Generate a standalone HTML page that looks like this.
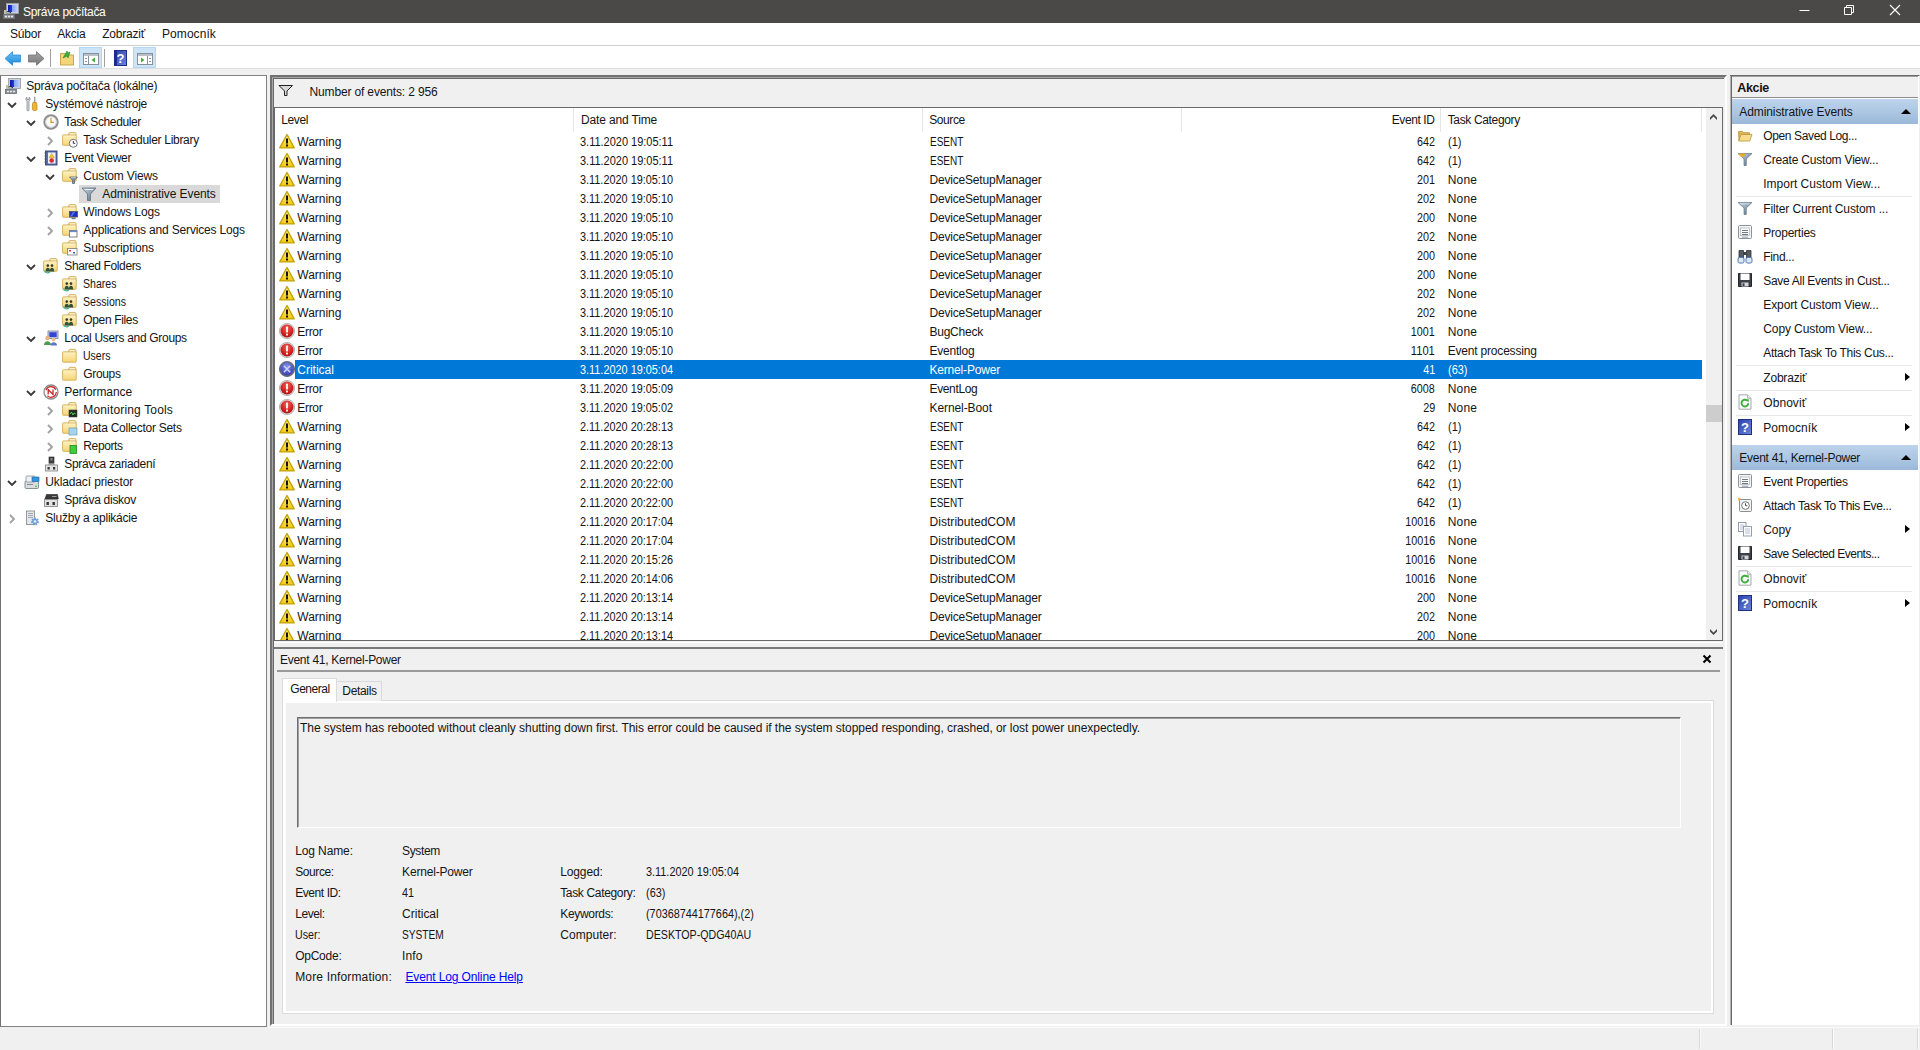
<!DOCTYPE html>
<html lang="sk"><head><meta charset="utf-8"><title>Správa počítača</title>
<style>
*{box-sizing:border-box;margin:0;padding:0}
html,body{width:1920px;height:1050px;overflow:hidden;background:#f0f0f0}
body{font-family:"Liberation Sans",sans-serif;font-size:12px;color:#141414;position:relative}
.abs{position:absolute}
.t{position:absolute;white-space:nowrap;line-height:16px;height:16px}
svg{display:block}
.ic{position:absolute;width:16px;height:16px}
#title{left:0;top:0;width:1920px;height:23px;background:#4a4948}
#menubar{left:0;top:23px;width:1920px;height:22px;background:#fff}
#toolbar{left:0;top:45px;width:1920px;height:23px;background:#fff;border-top:1px solid #cfcfcf}
#tree{left:0;top:75px;width:267px;height:952px;background:#fff;border:1px solid #828282;border-left:1px solid #707070}
#mid{left:270px;top:75px;width:1457px;height:951px;background:#f0f0f0;border:2px solid #707070;border-right-color:#fff;border-bottom-color:#fff}
.row{position:absolute;left:0;height:19px;width:1430px}
.c{position:absolute;top:2px;line-height:16px;white-space:nowrap}
.chev{position:absolute;width:10px;height:10px}
.act{position:absolute;left:1763px;white-space:nowrap;line-height:16px}
.sep{position:absolute;left:1736px;width:176px;height:1px;background:#e8e8e8}
.arr{position:absolute;left:1905px;width:0;height:0;border-left:5px solid #000;border-top:4.5px solid transparent;border-bottom:4.5px solid transparent}
.lab{position:absolute;white-space:nowrap;line-height:16px}
</style></head><body>

<div id="title" class="abs"></div>
<div class="ic" style="left:3px;top:3px"><svg width="16" height="16" viewBox="0 0 16 16"><defs><linearGradient id="cs" x1="0" y1="0" x2="1" y2="0"><stop offset="0" stop-color="#0a14a8"/><stop offset=".45" stop-color="#2a3fe0"/><stop offset=".5" stop-color="#8aa6f8"/><stop offset="1" stop-color="#b8ccff"/></linearGradient></defs><rect x="3.500" y=".5" width="12" height="10" fill="#cdd1d8" stroke="#9aa0a8" stroke-width=".9"/><rect x="5" y="2" width="9" height="7" fill="url(#cs)"/><path d="M2 11.500c.5-3 3.500-4 6-1.500" fill="none" stroke="#2a2a2a" stroke-width="1"/><rect x="1" y="7" width="2.500" height="4" fill="#b9c3b0"/><rect x=".5" y="11.500" width="11" height="4" fill="#8b9097" stroke="#686d74" stroke-width=".8"/><path d="M2 13.500h2M5 13.500h2M8 13.500h2" stroke="#e8e8e8" stroke-width="1.400"/></svg></div>
<div class="t" style="left:23px;top:4px;letter-spacing:-0.281px;color:#fff;">Správa počítača</div>
<svg class="abs" style="left:1790px;top:0" width="130" height="23" viewBox="0 0 130 23"><path d="M9.500 10.500h10" stroke="#fff" stroke-width="1"/><path d="M54.500 7.500h7v7h-7zM56.500 7.500v-2h7v7h-2" fill="none" stroke="#fff" stroke-width="1"/><path d="M100 5l10 10M110 5l-10 10" stroke="#fff" stroke-width="1.100"/></svg>
<div id="menubar" class="abs"></div>
<div class="t" style="left:10px;top:26px;letter-spacing:-0.206px;">Súbor</div>
<div class="t" style="left:57.2px;top:26px;letter-spacing:-0.189px;">Akcia</div>
<div class="t" style="left:102.2px;top:26px;letter-spacing:-0.202px;">Zobraziť</div>
<div class="t" style="left:162px;top:26px;letter-spacing:0.068px;">Pomocník</div>
<div id="toolbar" class="abs"></div>
<div class="abs" style="left:0;top:68px;width:1920px;height:1px;background:#dfdfdf"></div>
<svg class="abs" style="left:0;top:46px" width="170" height="22" viewBox="0 0 170 22"><defs><linearGradient id="ab" x1="0" y1="0" x2="0" y2="1"><stop offset="0" stop-color="#6cc4f6"/><stop offset="1" stop-color="#1c86d8"/></linearGradient><linearGradient id="ag" x1="0" y1="0" x2="0" y2="1"><stop offset="0" stop-color="#a8a8a8"/><stop offset="1" stop-color="#747474"/></linearGradient></defs><path d="M5 12.500l7.500-6.800v3.300h8v7h-8v3.300z" fill="url(#ab)" stroke="#2a8ad6" stroke-width=".8" stroke-linejoin="round"/><path d="M44 12.500l-7.500-6.800v3.300h-8v7h8v3.300z" fill="url(#ag)" stroke="#6e6e6e" stroke-width=".8" stroke-linejoin="round"/><path d="M50.500 3v18" stroke="#a0a0a0" stroke-width="1"/><path d="M60.500 7.500h5l1 1.500h7v10h-13z" fill="#f3d67a" stroke="#c9a64a" stroke-width="1"/><path d="M63 12l4-7 1 2 2-1-2 6-1-2z" fill="#3fae3f" stroke="#2a8a2a" stroke-width=".6"/><rect x="79.500" y="1.500" width="22" height="20" fill="#cce4f7" stroke="#b3d6f3" stroke-width="1"/><rect x="83.500" y="7.500" width="15" height="11" fill="#fff" stroke="#8a9099" stroke-width="1"/><rect x="84" y="8" width="14" height="2" fill="#b9c0c9"/><path d="M88.500 10v8" stroke="#8a9099"/><path d="M95 11.500v5l-3.500-2.500z" fill="#3fae3f"/><path d="M85 12.500h2M85 15.500h2" stroke="#8a9099"/><path d="M104.500 3v18" stroke="#a0a0a0" stroke-width="1"/><rect x="114.500" y="4.500" width="12" height="15" fill="url(#hg2)" stroke="#1f2f86" stroke-width="1"/><rect x="114" y="4" width="3" height="16" fill="#1c2c8e"/><defs><linearGradient id="hg2" x1="0" y1="0" x2="1" y2="1"><stop offset="0" stop-color="#2a3fae"/><stop offset="1" stop-color="#6c88dc"/></linearGradient></defs><text x="120.500" y="17" font-family="Liberation Sans,sans-serif" font-weight="bold" font-size="13" fill="#fff" text-anchor="middle">?</text><rect x="133.500" y="1.500" width="22" height="20" fill="#cce4f7" stroke="#b3d6f3" stroke-width="1"/><rect x="137.500" y="7.500" width="15" height="11" fill="#fff" stroke="#8a9099" stroke-width="1"/><rect x="138" y="8" width="14" height="2" fill="#b9c0c9"/><path d="M147.500 10v8" stroke="#8a9099"/><path d="M141 11.500v5l3.500-2.500z" fill="#3fae3f"/><path d="M149 12.500h2M149 15.500h2" stroke="#8a9099"/></svg>
<div id="tree" class="abs"></div>
<div class="ic" style="left:5px;top:78px"><svg width="16" height="16" viewBox="0 0 16 16"><defs><linearGradient id="cs" x1="0" y1="0" x2="1" y2="0"><stop offset="0" stop-color="#0a14a8"/><stop offset=".45" stop-color="#2a3fe0"/><stop offset=".5" stop-color="#8aa6f8"/><stop offset="1" stop-color="#b8ccff"/></linearGradient></defs><rect x="3.500" y=".5" width="12" height="10" fill="#cdd1d8" stroke="#9aa0a8" stroke-width=".9"/><rect x="5" y="2" width="9" height="7" fill="url(#cs)"/><path d="M2 11.500c.5-3 3.500-4 6-1.500" fill="none" stroke="#2a2a2a" stroke-width="1"/><rect x="1" y="7" width="2.500" height="4" fill="#b9c3b0"/><rect x=".5" y="11.500" width="11" height="4" fill="#8b9097" stroke="#686d74" stroke-width=".8"/><path d="M2 13.500h2M5 13.500h2M8 13.500h2" stroke="#e8e8e8" stroke-width="1.400"/></svg></div>
<div class="t" style="left:26.3px;top:78px;letter-spacing:-0.203px;">Správa počítača (lokálne)</div>
<svg class="chev" style="left:7px;top:100px" viewBox="0 0 10 10"><path d="M1 3l4 4 4-4" fill="none" stroke="#3a3a3a" stroke-width="1.800"/></svg>
<div class="ic" style="left:24px;top:96px"><svg width="16" height="16" viewBox="0 0 16 16"><path d="M3 1.2c-1.6.8-1.6 3 0 3.8v9c0 1.2 2 1.2 2 0V5c1.6-.8 1.6-3 0-3.8v2.3H3z" fill="#d8dade" stroke="#7d828a" stroke-width=".7"/><path d="M10 .8h1.4v6H10z" fill="#9a9fa6"/><path d="M9 6.5h3.4l.6 2.5v4.6c0 1.4-4.6 1.4-4.6 0V9z" fill="#f1b72b" stroke="#b7811a" stroke-width=".7"/></svg></div>
<div class="t" style="left:45.3px;top:96px;letter-spacing:-0.199px;">Systémové nástroje</div>
<svg class="chev" style="left:26px;top:118px" viewBox="0 0 10 10"><path d="M1 3l4 4 4-4" fill="none" stroke="#3a3a3a" stroke-width="1.800"/></svg>
<div class="ic" style="left:43px;top:114px"><svg width="16" height="16" viewBox="0 0 16 16"><circle cx="8" cy="8" r="6.700" fill="#f4f4f4" stroke="#8e8e8e" stroke-width="2"/><circle cx="8" cy="8" r="5.200" fill="#fbfbfb" stroke="#d0d0d0" stroke-width=".8"/><path d="M8 4v4.300h3" stroke="#d39a2a" stroke-width="1.200" fill="none"/></svg></div>
<div class="t" style="left:64.3px;top:114px;letter-spacing:-0.389px;">Task Scheduler</div>
<svg class="chev" style="left:45px;top:136px" viewBox="0 0 10 10"><path d="M3 1l4 4-4 4" fill="none" stroke="#a0a0a0" stroke-width="1.800"/></svg>
<div class="ic" style="left:62px;top:132px"><svg width="16" height="16" viewBox="0 0 16 16"><defs><linearGradient id="fg" x1="0" y1="0" x2="0" y2="1"><stop offset="0" stop-color="#fef3c4"/><stop offset="1" stop-color="#f6d471"/></linearGradient></defs><g transform="translate(0,-1.1)"><path d="M6.800 2.500l.8-1h5.600l.8 1v3h-7.200z" fill="#f3dc98" stroke="#cfae5c" stroke-width=".9"/><rect x="7.900" y="2.600" width="5" height="1.600" fill="#fffdf2"/><rect x=".6" y="4" width="13.600" height="10.400" rx=".7" fill="url(#fg)" stroke="#d3ad58" stroke-width=".9"/></g><circle cx="11.300" cy="11.300" r="4" fill="#fff" stroke="#6f757c" stroke-width="1"/><path d="M11.300 9v2.300h1.900" stroke="#333" fill="none" stroke-width="1"/></svg></div>
<div class="t" style="left:83.3px;top:132px;letter-spacing:-0.294px;">Task Scheduler Library</div>
<svg class="chev" style="left:26px;top:154px" viewBox="0 0 10 10"><path d="M1 3l4 4 4-4" fill="none" stroke="#3a3a3a" stroke-width="1.800"/></svg>
<div class="ic" style="left:43px;top:150px"><svg width="16" height="16" viewBox="0 0 16 16"><rect x="2.5" y="1" width="11.5" height="14" fill="#5a6fb5" stroke="#34406f" stroke-width=".9"/><rect x="5" y="2.5" width="7.5" height="11" fill="#eef0f8"/><path d="M1.5 3h2.5M1.5 6h2.5M1.5 9h2.5M1.5 12h2.5" stroke="#555" stroke-width="1"/><circle cx="8.7" cy="10.5" r="2.3" fill="#d92c2c"/><path d="M8.7 3.5l2.6 4.2H6.1z" fill="#f4c91f" stroke="#a98300" stroke-width=".4"/></svg></div>
<div class="t" style="left:64.3px;top:150px;letter-spacing:-0.307px;">Event Viewer</div>
<svg class="chev" style="left:45px;top:172px" viewBox="0 0 10 10"><path d="M1 3l4 4 4-4" fill="none" stroke="#3a3a3a" stroke-width="1.800"/></svg>
<div class="ic" style="left:62px;top:168px"><svg width="16" height="16" viewBox="0 0 16 16"><defs><linearGradient id="fg" x1="0" y1="0" x2="0" y2="1"><stop offset="0" stop-color="#fef3c4"/><stop offset="1" stop-color="#f6d471"/></linearGradient></defs><g transform="translate(0,-1.1)"><path d="M6.800 2.500l.8-1h5.600l.8 1v3h-7.200z" fill="#f3dc98" stroke="#cfae5c" stroke-width=".9"/><rect x="7.900" y="2.600" width="5" height="1.600" fill="#fffdf2"/><rect x=".6" y="4" width="13.600" height="10.400" rx=".7" fill="url(#fg)" stroke="#d3ad58" stroke-width=".9"/></g><path d="M7.500 9h8l-3 3.200v3.300h-2v-3.300z" fill="#8896a4" stroke="#4d5a66" stroke-width=".7"/><path d="M8.800 9.700h5.400" stroke="#dfe6ee" stroke-width=".7"/></svg></div>
<div class="t" style="left:83.3px;top:168px;letter-spacing:-0.165px;">Custom Views</div>
<div class="abs" style="left:79px;top:185px;width:141px;height:18px;background:#d9d9d9"></div>
<div class="ic" style="left:81px;top:186px"><svg width="16" height="16" viewBox="0 0 16 16"><defs><linearGradient id="fu" x1="0" y1="0" x2="1" y2="1"><stop offset="0" stop-color="#c9d5e0"/><stop offset=".5" stop-color="#8fa2b4"/><stop offset="1" stop-color="#5d6e7e"/></linearGradient></defs><path d="M1 2h14l-5.500 6v6.500h-3V8z" fill="url(#fu)" stroke="#5f6f7f" stroke-width=".8"/><path d="M3.300 3h9.400l-1 1.100H4.300z" fill="#e9eef3"/></svg></div>
<div class="t" style="left:102.3px;top:186px;letter-spacing:-0.095px;">Administrative Events</div>
<svg class="chev" style="left:45px;top:208px" viewBox="0 0 10 10"><path d="M3 1l4 4-4 4" fill="none" stroke="#a0a0a0" stroke-width="1.800"/></svg>
<div class="ic" style="left:62px;top:204px"><svg width="16" height="16" viewBox="0 0 16 16"><defs><linearGradient id="fg" x1="0" y1="0" x2="0" y2="1"><stop offset="0" stop-color="#fef3c4"/><stop offset="1" stop-color="#f6d471"/></linearGradient></defs><g transform="translate(0,-1.1)"><path d="M6.800 2.500l.8-1h5.600l.8 1v3h-7.200z" fill="#f3dc98" stroke="#cfae5c" stroke-width=".9"/><rect x="7.900" y="2.600" width="5" height="1.600" fill="#fffdf2"/><rect x=".6" y="4" width="13.600" height="10.400" rx=".7" fill="url(#fg)" stroke="#d3ad58" stroke-width=".9"/></g><rect x="7.500" y="7.500" width="8" height="5.500" fill="#1f2fc4" stroke="#4a5666" stroke-width=".8"/><path d="M8 12.500l3-4.500h2l-3 4.500z" fill="#6f8cff" opacity=".7"/><rect x="9.500" y="14" width="4" height="1.200" fill="#6a7480"/></svg></div>
<div class="t" style="left:83.3px;top:204px;letter-spacing:-0.121px;">Windows Logs</div>
<svg class="chev" style="left:45px;top:226px" viewBox="0 0 10 10"><path d="M3 1l4 4-4 4" fill="none" stroke="#a0a0a0" stroke-width="1.800"/></svg>
<div class="ic" style="left:62px;top:222px"><svg width="16" height="16" viewBox="0 0 16 16"><defs><linearGradient id="fg" x1="0" y1="0" x2="0" y2="1"><stop offset="0" stop-color="#fef3c4"/><stop offset="1" stop-color="#f6d471"/></linearGradient></defs><g transform="translate(0,-1.1)"><path d="M6.800 2.500l.8-1h5.600l.8 1v3h-7.200z" fill="#f3dc98" stroke="#cfae5c" stroke-width=".9"/><rect x="7.900" y="2.600" width="5" height="1.600" fill="#fffdf2"/><rect x=".6" y="4" width="13.600" height="10.400" rx=".7" fill="url(#fg)" stroke="#d3ad58" stroke-width=".9"/></g><rect x="7.5" y="8.5" width="7.5" height="6.5" fill="#fff" stroke="#777" stroke-width=".9"/><rect x="7.5" y="8.5" width="7.5" height="1.6" fill="#6b86c9"/></svg></div>
<div class="t" style="left:83.3px;top:222px;letter-spacing:-0.172px;">Applications and Services Logs</div>
<div class="ic" style="left:62px;top:240px"><svg width="16" height="16" viewBox="0 0 16 16"><defs><linearGradient id="fg" x1="0" y1="0" x2="0" y2="1"><stop offset="0" stop-color="#fef3c4"/><stop offset="1" stop-color="#f6d471"/></linearGradient></defs><g transform="translate(0,-1.1)"><path d="M6.800 2.500l.8-1h5.600l.8 1v3h-7.200z" fill="#f3dc98" stroke="#cfae5c" stroke-width=".9"/><rect x="7.900" y="2.600" width="5" height="1.600" fill="#fffdf2"/><rect x=".6" y="4" width="13.600" height="10.400" rx=".7" fill="url(#fg)" stroke="#d3ad58" stroke-width=".9"/></g><rect x="5.5" y="8.5" width="9.5" height="6.5" fill="#fff" stroke="#888" stroke-width=".9"/><rect x="7" y="10" width="2" height="1.5" fill="#d33"/><rect x="11" y="12" width="2" height="1.5" fill="#36c"/></svg></div>
<div class="t" style="left:83.3px;top:240px;letter-spacing:-0.104px;">Subscriptions</div>
<svg class="chev" style="left:26px;top:262px" viewBox="0 0 10 10"><path d="M1 3l4 4 4-4" fill="none" stroke="#3a3a3a" stroke-width="1.800"/></svg>
<div class="ic" style="left:43px;top:258px"><svg width="16" height="16" viewBox="0 0 16 16"><defs><linearGradient id="fg" x1="0" y1="0" x2="0" y2="1"><stop offset="0" stop-color="#fef3c4"/><stop offset="1" stop-color="#f6d471"/></linearGradient></defs><g transform="translate(0,-1.1)"><path d="M6.800 2.500l.8-1h5.600l.8 1v3h-7.200z" fill="#f3dc98" stroke="#cfae5c" stroke-width=".9"/><rect x="7.900" y="2.600" width="5" height="1.600" fill="#fffdf2"/><rect x=".6" y="4" width="13.600" height="10.400" rx=".7" fill="url(#fg)" stroke="#d3ad58" stroke-width=".9"/></g><circle cx="4.800" cy="7.600" r="1.300" fill="#2a3a30"/><circle cx="9" cy="7.600" r="1.300" fill="#2a3a30"/><path d="M2.600 13.600c0-2.800 1.100-3.800 2.200-3.800s2.200 1 2.200 3.800zM6.800 13.600c0-2.800 1.100-3.800 2.200-3.800s2.200 1 2.200 3.800z" fill="#2f5240"/><path d="M1.500 12.600c.5 2.600 4 2.800 5.300 1.200" fill="none" stroke="#3fae8e" stroke-width="1.200"/></svg></div>
<div class="t" style="left:64.3px;top:258px;letter-spacing:-0.389px;">Shared Folders</div>
<div class="ic" style="left:62px;top:276px"><svg width="16" height="16" viewBox="0 0 16 16"><defs><linearGradient id="fg" x1="0" y1="0" x2="0" y2="1"><stop offset="0" stop-color="#fef3c4"/><stop offset="1" stop-color="#f6d471"/></linearGradient></defs><g transform="translate(0,-1.1)"><path d="M6.800 2.500l.8-1h5.600l.8 1v3h-7.200z" fill="#f3dc98" stroke="#cfae5c" stroke-width=".9"/><rect x="7.900" y="2.600" width="5" height="1.600" fill="#fffdf2"/><rect x=".6" y="4" width="13.600" height="10.400" rx=".7" fill="url(#fg)" stroke="#d3ad58" stroke-width=".9"/></g><circle cx="4.800" cy="7.600" r="1.300" fill="#2a3a30"/><circle cx="9" cy="7.600" r="1.300" fill="#2a3a30"/><path d="M2.600 13.600c0-2.800 1.100-3.800 2.200-3.800s2.200 1 2.200 3.800zM6.800 13.600c0-2.800 1.100-3.800 2.200-3.800s2.200 1 2.200 3.800z" fill="#2f5240"/><path d="M1.500 12.600c.5 2.600 4 2.800 5.300 1.200" fill="none" stroke="#3fae8e" stroke-width="1.200"/></svg></div>
<div class="t" style="left:83.3px;top:276px;"><span style="display:inline-block;transform-origin:left center;transform:scaleX(0.8809)">Shares</span></div>
<div class="ic" style="left:62px;top:294px"><svg width="16" height="16" viewBox="0 0 16 16"><defs><linearGradient id="fg" x1="0" y1="0" x2="0" y2="1"><stop offset="0" stop-color="#fef3c4"/><stop offset="1" stop-color="#f6d471"/></linearGradient></defs><g transform="translate(0,-1.1)"><path d="M6.800 2.500l.8-1h5.600l.8 1v3h-7.200z" fill="#f3dc98" stroke="#cfae5c" stroke-width=".9"/><rect x="7.900" y="2.600" width="5" height="1.600" fill="#fffdf2"/><rect x=".6" y="4" width="13.600" height="10.400" rx=".7" fill="url(#fg)" stroke="#d3ad58" stroke-width=".9"/></g><circle cx="4.800" cy="7.600" r="1.300" fill="#2a3a30"/><circle cx="9" cy="7.600" r="1.300" fill="#2a3a30"/><path d="M2.600 13.600c0-2.800 1.100-3.800 2.200-3.800s2.200 1 2.200 3.800zM6.800 13.600c0-2.800 1.100-3.800 2.200-3.800s2.200 1 2.200 3.800z" fill="#2f5240"/><path d="M1.500 12.600c.5 2.600 4 2.800 5.300 1.200" fill="none" stroke="#3fae8e" stroke-width="1.200"/></svg></div>
<div class="t" style="left:83.3px;top:294px;"><span style="display:inline-block;transform-origin:left center;transform:scaleX(0.8829)">Sessions</span></div>
<div class="ic" style="left:62px;top:312px"><svg width="16" height="16" viewBox="0 0 16 16"><defs><linearGradient id="fg" x1="0" y1="0" x2="0" y2="1"><stop offset="0" stop-color="#fef3c4"/><stop offset="1" stop-color="#f6d471"/></linearGradient></defs><g transform="translate(0,-1.1)"><path d="M6.800 2.500l.8-1h5.600l.8 1v3h-7.200z" fill="#f3dc98" stroke="#cfae5c" stroke-width=".9"/><rect x="7.900" y="2.600" width="5" height="1.600" fill="#fffdf2"/><rect x=".6" y="4" width="13.600" height="10.400" rx=".7" fill="url(#fg)" stroke="#d3ad58" stroke-width=".9"/></g><circle cx="4.800" cy="7.600" r="1.300" fill="#2a3a30"/><circle cx="9" cy="7.600" r="1.300" fill="#2a3a30"/><path d="M2.600 13.600c0-2.800 1.100-3.800 2.200-3.800s2.200 1 2.200 3.800zM6.800 13.600c0-2.800 1.100-3.800 2.200-3.800s2.200 1 2.200 3.800z" fill="#2f5240"/><path d="M1.500 12.600c.5 2.600 4 2.800 5.300 1.200" fill="none" stroke="#3fae8e" stroke-width="1.200"/></svg></div>
<div class="t" style="left:83.3px;top:312px;letter-spacing:-0.353px;">Open Files</div>
<svg class="chev" style="left:26px;top:334px" viewBox="0 0 10 10"><path d="M1 3l4 4 4-4" fill="none" stroke="#3a3a3a" stroke-width="1.800"/></svg>
<div class="ic" style="left:43px;top:330px"><svg width="16" height="16" viewBox="0 0 16 16"><rect x="5" y="1" width="10" height="7.5" fill="#cfd8ea" stroke="#6f7c92" stroke-width=".8"/><rect x="6.3" y="2.2" width="7.4" height="5" fill="#3246d1"/><circle cx="4.5" cy="8" r="2.2" fill="#e8b37a"/><path d="M1 15c0-5 7-5 7 0z" fill="#4f9a4f"/><circle cx="10.5" cy="9.5" r="2" fill="#e8c08a"/><path d="M7.5 15.5c0-4.5 6.5-4.5 6.5 0z" fill="#5a78c8"/></svg></div>
<div class="t" style="left:64.3px;top:330px;letter-spacing:-0.314px;">Local Users and Groups</div>
<div class="ic" style="left:62px;top:348px"><svg width="16" height="16" viewBox="0 0 16 16"><defs><linearGradient id="fg" x1="0" y1="0" x2="0" y2="1"><stop offset="0" stop-color="#fef3c4"/><stop offset="1" stop-color="#f6d471"/></linearGradient></defs><g transform="translate(0,-0.2)"><path d="M6.800 2.500l.8-1h5.600l.8 1v3h-7.200z" fill="#f3dc98" stroke="#cfae5c" stroke-width=".9"/><rect x="7.900" y="2.600" width="5" height="1.600" fill="#fffdf2"/><rect x=".6" y="4" width="13.600" height="10.400" rx=".7" fill="url(#fg)" stroke="#d3ad58" stroke-width=".9"/></g></svg></div>
<div class="t" style="left:83.3px;top:348px;"><span style="display:inline-block;transform-origin:left center;transform:scaleX(0.8774)">Users</span></div>
<div class="ic" style="left:62px;top:366px"><svg width="16" height="16" viewBox="0 0 16 16"><defs><linearGradient id="fg" x1="0" y1="0" x2="0" y2="1"><stop offset="0" stop-color="#fef3c4"/><stop offset="1" stop-color="#f6d471"/></linearGradient></defs><g transform="translate(0,-0.2)"><path d="M6.800 2.500l.8-1h5.600l.8 1v3h-7.200z" fill="#f3dc98" stroke="#cfae5c" stroke-width=".9"/><rect x="7.900" y="2.600" width="5" height="1.600" fill="#fffdf2"/><rect x=".6" y="4" width="13.600" height="10.400" rx=".7" fill="url(#fg)" stroke="#d3ad58" stroke-width=".9"/></g></svg></div>
<div class="t" style="left:83.3px;top:366px;letter-spacing:-0.343px;">Groups</div>
<svg class="chev" style="left:26px;top:388px" viewBox="0 0 10 10"><path d="M1 3l4 4 4-4" fill="none" stroke="#3a3a3a" stroke-width="1.800"/></svg>
<div class="ic" style="left:43px;top:384px"><svg width="16" height="16" viewBox="0 0 16 16"><circle cx="8" cy="8" r="7" fill="#fff" stroke="#8a8a8a" stroke-width="1.3"/><circle cx="8" cy="8" r="5.3" fill="none" stroke="#cc2222" stroke-width="1.2" stroke-dasharray="12 6"/><path d="M5.2 10.5V5.5l4.8 5V5.5" stroke="#cc2222" stroke-width="1.3" fill="none"/></svg></div>
<div class="t" style="left:64.3px;top:384px;letter-spacing:-0.091px;">Performance</div>
<svg class="chev" style="left:45px;top:406px" viewBox="0 0 10 10"><path d="M3 1l4 4-4 4" fill="none" stroke="#a0a0a0" stroke-width="1.800"/></svg>
<div class="ic" style="left:62px;top:402px"><svg width="16" height="16" viewBox="0 0 16 16"><defs><linearGradient id="fg" x1="0" y1="0" x2="0" y2="1"><stop offset="0" stop-color="#fef3c4"/><stop offset="1" stop-color="#f6d471"/></linearGradient></defs><g transform="translate(0,-1.1)"><path d="M6.800 2.500l.8-1h5.600l.8 1v3h-7.200z" fill="#f3dc98" stroke="#cfae5c" stroke-width=".9"/><rect x="7.900" y="2.600" width="5" height="1.600" fill="#fffdf2"/><rect x=".6" y="4" width="13.600" height="10.400" rx=".7" fill="url(#fg)" stroke="#d3ad58" stroke-width=".9"/></g><rect x="7" y="8" width="8" height="7" fill="#1d2a1d" stroke="#444" stroke-width=".6"/><path d="M8 12l1.5-2 1.5 3 1.2-2 1.5 1" stroke="#5fe05f" fill="none" stroke-width=".9"/></svg></div>
<div class="t" style="left:83.3px;top:402px;letter-spacing:0.158px;">Monitoring Tools</div>
<svg class="chev" style="left:45px;top:424px" viewBox="0 0 10 10"><path d="M3 1l4 4-4 4" fill="none" stroke="#a0a0a0" stroke-width="1.800"/></svg>
<div class="ic" style="left:62px;top:420px"><svg width="16" height="16" viewBox="0 0 16 16"><defs><linearGradient id="fg" x1="0" y1="0" x2="0" y2="1"><stop offset="0" stop-color="#fef3c4"/><stop offset="1" stop-color="#f6d471"/></linearGradient></defs><g transform="translate(0,-1.1)"><path d="M6.800 2.500l.8-1h5.600l.8 1v3h-7.200z" fill="#f3dc98" stroke="#cfae5c" stroke-width=".9"/><rect x="7.900" y="2.600" width="5" height="1.600" fill="#fffdf2"/><rect x=".6" y="4" width="13.600" height="10.400" rx=".7" fill="url(#fg)" stroke="#d3ad58" stroke-width=".9"/></g><rect x="7" y="8" width="8" height="7" fill="#a7d2e8" stroke="#6aa0bd" stroke-width=".7"/></svg></div>
<div class="t" style="left:83.3px;top:420px;letter-spacing:-0.263px;">Data Collector Sets</div>
<svg class="chev" style="left:45px;top:442px" viewBox="0 0 10 10"><path d="M3 1l4 4-4 4" fill="none" stroke="#a0a0a0" stroke-width="1.800"/></svg>
<div class="ic" style="left:62px;top:438px"><svg width="16" height="16" viewBox="0 0 16 16"><defs><linearGradient id="fg" x1="0" y1="0" x2="0" y2="1"><stop offset="0" stop-color="#fef3c4"/><stop offset="1" stop-color="#f6d471"/></linearGradient></defs><g transform="translate(0,-1.1)"><path d="M6.800 2.500l.8-1h5.600l.8 1v3h-7.200z" fill="#f3dc98" stroke="#cfae5c" stroke-width=".9"/><rect x="7.900" y="2.600" width="5" height="1.600" fill="#fffdf2"/><rect x=".6" y="4" width="13.600" height="10.400" rx=".7" fill="url(#fg)" stroke="#d3ad58" stroke-width=".9"/></g><rect x="8" y="7.5" width="6.5" height="8" fill="#3ccf3c" stroke="#1f8f1f" stroke-width=".8"/></svg></div>
<div class="t" style="left:83.3px;top:438px;letter-spacing:-0.376px;">Reports</div>
<div class="ic" style="left:43px;top:456px"><svg width="16" height="16" viewBox="0 0 16 16"><rect x="6" y="1" width="5" height="6.500" fill="#3e3e3e" stroke="#222" stroke-width=".6"/><rect x="7.500" y="2" width="2" height="2.500" fill="#8a8a8a"/><path d="M4.500 9.500l1.500-2h5l1.500 2z" fill="#b8b8b8"/><rect x="2.500" y="9" width="12" height="6" fill="#e4e4e4" stroke="#8c8c8c" stroke-width=".9"/><rect x="4.500" y="11" width="2.200" height="2.500" fill="#333"/><rect x="10" y="11" width="2.200" height="2.500" fill="#333"/></svg></div>
<div class="t" style="left:64.3px;top:456px;letter-spacing:-0.337px;">Správca zariadení</div>
<svg class="chev" style="left:7px;top:478px" viewBox="0 0 10 10"><path d="M1 3l4 4 4-4" fill="none" stroke="#3a3a3a" stroke-width="1.800"/></svg>
<div class="ic" style="left:24px;top:474px"><svg width="16" height="16" viewBox="0 0 16 16"><rect x="1" y="7" width="13.5" height="7.5" rx="1.2" fill="#d9dde2" stroke="#7a828c" stroke-width=".9"/><rect x="2" y="2" width="9" height="6" rx="1" fill="#eef1f5" stroke="#8a929c" stroke-width=".8"/><rect x="8" y="3" width="7" height="4.5" fill="#2f95e0" stroke="#1a66a8" stroke-width=".6"/><circle cx="12" cy="12.3" r=".9" fill="#3bbf3b"/><rect x="3" y="10" width="6" height="1" fill="#888"/></svg></div>
<div class="t" style="left:45.3px;top:474px;letter-spacing:-0.132px;">Ukladací priestor</div>
<div class="ic" style="left:43px;top:492px"><svg width="16" height="16" viewBox="0 0 16 16"><path d="M3.500 2.500h11l.8 4.500H2z" fill="#3a3a3a" stroke="#222" stroke-width=".6"/><rect x="9" y="4" width="4.500" height="1" fill="#9a9a9a"/><rect x="1.500" y="7.500" width="13" height="7" fill="#e2e2e2" stroke="#8a8a8a" stroke-width=".9"/><rect x="3.500" y="10" width="2.400" height="3" fill="#333"/><rect x="9.500" y="10" width="2.400" height="3" fill="#333"/></svg></div>
<div class="t" style="left:64.3px;top:492px;letter-spacing:-0.290px;">Správa diskov</div>
<svg class="chev" style="left:7px;top:514px" viewBox="0 0 10 10"><path d="M3 1l4 4-4 4" fill="none" stroke="#a0a0a0" stroke-width="1.800"/></svg>
<div class="ic" style="left:24px;top:510px"><svg width="16" height="16" viewBox="0 0 16 16"><rect x="2.5" y="1" width="8" height="13.5" fill="#e4e7eb" stroke="#8a9098" stroke-width=".9"/><path d="M4 3.5h5M4 5.5h5M4 7.5h5" stroke="#9aa0a8" stroke-width=".9"/><circle cx="11" cy="11.5" r="3" fill="none" stroke="#6f9fd8" stroke-width="2" stroke-dasharray="1.6 1"/><circle cx="11" cy="11.5" r="2.2" fill="#9cc2ee" stroke="#4f82c0" stroke-width=".7"/><circle cx="11" cy="11.5" r=".9" fill="#fff"/></svg></div>
<div class="t" style="left:45.3px;top:510px;letter-spacing:-0.231px;">Služby a aplikácie</div>
<div id="mid" class="abs"></div>
<div class="abs" style="left:272px;top:77px;width:1453px;height:947px;border-left:1px solid #a6a6a6;border-top:1px solid #a6a6a6"></div>
<div class="abs" style="left:273px;top:78px;width:1451px;height:946px;border-left:1px solid #696969;border-top:1px solid #696969"></div>
<svg class="abs" style="left:278px;top:84px" width="16" height="14" viewBox="0 0 16 14"><path d="M1 1.500h13.500L9 7v4.500H6.500V7z" fill="#d8d8d8" stroke="#222" stroke-width="1"/></svg>
<div class="t" style="left:309.5px;top:84px;letter-spacing:-0.149px;">Number of events: 2 956</div>
<div class="abs" style="left:273px;top:107px;width:1450px;height:534px;background:#fff;border:1px solid #696969;overflow:hidden" id="tbl">
<div class="c" style="left:7.3px;letter-spacing:-0.417px;top:4px;">Level</div>
<div class="c" style="left:307px;letter-spacing:-0.157px;top:4px;">Date and Time</div>
<div class="c" style="left:655.3px;letter-spacing:-0.439px;top:4px;">Source</div>
<div class="c" style="left:1173.7px;letter-spacing:-0.346px;top:4px;">Task Category</div>
<div class="c" style="left:1060.6px;letter-spacing:-0.391px;width:100px;text-align:right;top:4px;">Event ID</div>
<div class="abs" style="left:299px;top:0;width:1px;height:24px;background:#e5e5e5"></div>
<div class="abs" style="left:648px;top:0;width:1px;height:24px;background:#e5e5e5"></div>
<div class="abs" style="left:907px;top:0;width:1px;height:24px;background:#e5e5e5"></div>
<div class="abs" style="left:1166px;top:0;width:1px;height:24px;background:#e5e5e5"></div>
<div class="abs" style="left:1427px;top:0;width:1px;height:24px;background:#e5e5e5"></div>
<div class="row" style="top:24px">
<div class="ic" style="left:5px;top:1px"><svg width="16" height="16" viewBox="0 0 16 16"><defs><linearGradient id="wg" x1="0" y1="0" x2="0" y2="1"><stop offset="0" stop-color="#fff68a"/><stop offset="1" stop-color="#f3c80f"/></linearGradient></defs><path d="M8 1.500L15.200 14.900H.8z" fill="url(#wg)" stroke="#c2a30a" stroke-width="1.400" stroke-linejoin="round"/><rect x="7" y="5.500" width="2" height="5" fill="#111"/><rect x="7" y="11.500" width="2" height="2" fill="#111"/></svg></div>
<div class="c" style="left:23.3px;letter-spacing:-0.036px;">Warning</div>
<div class="c" style="left:306.3px;"><span style="display:inline-block;transform:scaleX(0.9148);transform-origin:left center;">3.11.2020 19:05:11</span></div>
<div class="c" style="left:655.5px;"><span style="display:inline-block;transform-origin:left center;transform:scaleX(0.8322)">ESENT</span></div>
<div class="c" style="left:1061px;width:100px;text-align:right;"><span style="display:inline-block;transform:scaleX(0.8986);transform-origin:right center;">642</span></div>
<div class="c" style="left:1173.7px;"><span style="display:inline-block;transform:scaleX(0.9133);transform-origin:left center;">(1)</span></div>
</div>
<div class="row" style="top:43px">
<div class="ic" style="left:5px;top:1px"><svg width="16" height="16" viewBox="0 0 16 16"><defs><linearGradient id="wg" x1="0" y1="0" x2="0" y2="1"><stop offset="0" stop-color="#fff68a"/><stop offset="1" stop-color="#f3c80f"/></linearGradient></defs><path d="M8 1.500L15.200 14.900H.8z" fill="url(#wg)" stroke="#c2a30a" stroke-width="1.400" stroke-linejoin="round"/><rect x="7" y="5.500" width="2" height="5" fill="#111"/><rect x="7" y="11.500" width="2" height="2" fill="#111"/></svg></div>
<div class="c" style="left:23.3px;letter-spacing:-0.036px;">Warning</div>
<div class="c" style="left:306.3px;"><span style="display:inline-block;transform:scaleX(0.9148);transform-origin:left center;">3.11.2020 19:05:11</span></div>
<div class="c" style="left:655.5px;"><span style="display:inline-block;transform-origin:left center;transform:scaleX(0.8322)">ESENT</span></div>
<div class="c" style="left:1061px;width:100px;text-align:right;"><span style="display:inline-block;transform:scaleX(0.8986);transform-origin:right center;">642</span></div>
<div class="c" style="left:1173.7px;"><span style="display:inline-block;transform:scaleX(0.9133);transform-origin:left center;">(1)</span></div>
</div>
<div class="row" style="top:62px">
<div class="ic" style="left:5px;top:1px"><svg width="16" height="16" viewBox="0 0 16 16"><defs><linearGradient id="wg" x1="0" y1="0" x2="0" y2="1"><stop offset="0" stop-color="#fff68a"/><stop offset="1" stop-color="#f3c80f"/></linearGradient></defs><path d="M8 1.500L15.200 14.900H.8z" fill="url(#wg)" stroke="#c2a30a" stroke-width="1.400" stroke-linejoin="round"/><rect x="7" y="5.500" width="2" height="5" fill="#111"/><rect x="7" y="11.500" width="2" height="2" fill="#111"/></svg></div>
<div class="c" style="left:23.3px;letter-spacing:-0.036px;">Warning</div>
<div class="c" style="left:306.3px;"><span style="display:inline-block;transform:scaleX(0.9069);transform-origin:left center;">3.11.2020 19:05:10</span></div>
<div class="c" style="left:655.5px;letter-spacing:-0.189px;">DeviceSetupManager</div>
<div class="c" style="left:1061px;width:100px;text-align:right;"><span style="display:inline-block;transform:scaleX(0.8986);transform-origin:right center;">201</span></div>
<div class="c" style="left:1173.7px;letter-spacing:0.203px;">None</div>
</div>
<div class="row" style="top:81px">
<div class="ic" style="left:5px;top:1px"><svg width="16" height="16" viewBox="0 0 16 16"><defs><linearGradient id="wg" x1="0" y1="0" x2="0" y2="1"><stop offset="0" stop-color="#fff68a"/><stop offset="1" stop-color="#f3c80f"/></linearGradient></defs><path d="M8 1.500L15.200 14.900H.8z" fill="url(#wg)" stroke="#c2a30a" stroke-width="1.400" stroke-linejoin="round"/><rect x="7" y="5.500" width="2" height="5" fill="#111"/><rect x="7" y="11.500" width="2" height="2" fill="#111"/></svg></div>
<div class="c" style="left:23.3px;letter-spacing:-0.036px;">Warning</div>
<div class="c" style="left:306.3px;"><span style="display:inline-block;transform:scaleX(0.9069);transform-origin:left center;">3.11.2020 19:05:10</span></div>
<div class="c" style="left:655.5px;letter-spacing:-0.189px;">DeviceSetupManager</div>
<div class="c" style="left:1061px;width:100px;text-align:right;"><span style="display:inline-block;transform:scaleX(0.8986);transform-origin:right center;">202</span></div>
<div class="c" style="left:1173.7px;letter-spacing:0.203px;">None</div>
</div>
<div class="row" style="top:100px">
<div class="ic" style="left:5px;top:1px"><svg width="16" height="16" viewBox="0 0 16 16"><defs><linearGradient id="wg" x1="0" y1="0" x2="0" y2="1"><stop offset="0" stop-color="#fff68a"/><stop offset="1" stop-color="#f3c80f"/></linearGradient></defs><path d="M8 1.500L15.200 14.900H.8z" fill="url(#wg)" stroke="#c2a30a" stroke-width="1.400" stroke-linejoin="round"/><rect x="7" y="5.500" width="2" height="5" fill="#111"/><rect x="7" y="11.500" width="2" height="2" fill="#111"/></svg></div>
<div class="c" style="left:23.3px;letter-spacing:-0.036px;">Warning</div>
<div class="c" style="left:306.3px;"><span style="display:inline-block;transform:scaleX(0.9069);transform-origin:left center;">3.11.2020 19:05:10</span></div>
<div class="c" style="left:655.5px;letter-spacing:-0.189px;">DeviceSetupManager</div>
<div class="c" style="left:1061px;width:100px;text-align:right;"><span style="display:inline-block;transform:scaleX(0.8986);transform-origin:right center;">200</span></div>
<div class="c" style="left:1173.7px;letter-spacing:0.203px;">None</div>
</div>
<div class="row" style="top:119px">
<div class="ic" style="left:5px;top:1px"><svg width="16" height="16" viewBox="0 0 16 16"><defs><linearGradient id="wg" x1="0" y1="0" x2="0" y2="1"><stop offset="0" stop-color="#fff68a"/><stop offset="1" stop-color="#f3c80f"/></linearGradient></defs><path d="M8 1.500L15.200 14.900H.8z" fill="url(#wg)" stroke="#c2a30a" stroke-width="1.400" stroke-linejoin="round"/><rect x="7" y="5.500" width="2" height="5" fill="#111"/><rect x="7" y="11.500" width="2" height="2" fill="#111"/></svg></div>
<div class="c" style="left:23.3px;letter-spacing:-0.036px;">Warning</div>
<div class="c" style="left:306.3px;"><span style="display:inline-block;transform:scaleX(0.9069);transform-origin:left center;">3.11.2020 19:05:10</span></div>
<div class="c" style="left:655.5px;letter-spacing:-0.189px;">DeviceSetupManager</div>
<div class="c" style="left:1061px;width:100px;text-align:right;"><span style="display:inline-block;transform:scaleX(0.8986);transform-origin:right center;">202</span></div>
<div class="c" style="left:1173.7px;letter-spacing:0.203px;">None</div>
</div>
<div class="row" style="top:138px">
<div class="ic" style="left:5px;top:1px"><svg width="16" height="16" viewBox="0 0 16 16"><defs><linearGradient id="wg" x1="0" y1="0" x2="0" y2="1"><stop offset="0" stop-color="#fff68a"/><stop offset="1" stop-color="#f3c80f"/></linearGradient></defs><path d="M8 1.500L15.200 14.900H.8z" fill="url(#wg)" stroke="#c2a30a" stroke-width="1.400" stroke-linejoin="round"/><rect x="7" y="5.500" width="2" height="5" fill="#111"/><rect x="7" y="11.500" width="2" height="2" fill="#111"/></svg></div>
<div class="c" style="left:23.3px;letter-spacing:-0.036px;">Warning</div>
<div class="c" style="left:306.3px;"><span style="display:inline-block;transform:scaleX(0.9069);transform-origin:left center;">3.11.2020 19:05:10</span></div>
<div class="c" style="left:655.5px;letter-spacing:-0.189px;">DeviceSetupManager</div>
<div class="c" style="left:1061px;width:100px;text-align:right;"><span style="display:inline-block;transform:scaleX(0.8986);transform-origin:right center;">200</span></div>
<div class="c" style="left:1173.7px;letter-spacing:0.203px;">None</div>
</div>
<div class="row" style="top:157px">
<div class="ic" style="left:5px;top:1px"><svg width="16" height="16" viewBox="0 0 16 16"><defs><linearGradient id="wg" x1="0" y1="0" x2="0" y2="1"><stop offset="0" stop-color="#fff68a"/><stop offset="1" stop-color="#f3c80f"/></linearGradient></defs><path d="M8 1.500L15.200 14.900H.8z" fill="url(#wg)" stroke="#c2a30a" stroke-width="1.400" stroke-linejoin="round"/><rect x="7" y="5.500" width="2" height="5" fill="#111"/><rect x="7" y="11.500" width="2" height="2" fill="#111"/></svg></div>
<div class="c" style="left:23.3px;letter-spacing:-0.036px;">Warning</div>
<div class="c" style="left:306.3px;"><span style="display:inline-block;transform:scaleX(0.9069);transform-origin:left center;">3.11.2020 19:05:10</span></div>
<div class="c" style="left:655.5px;letter-spacing:-0.189px;">DeviceSetupManager</div>
<div class="c" style="left:1061px;width:100px;text-align:right;"><span style="display:inline-block;transform:scaleX(0.8986);transform-origin:right center;">200</span></div>
<div class="c" style="left:1173.7px;letter-spacing:0.203px;">None</div>
</div>
<div class="row" style="top:176px">
<div class="ic" style="left:5px;top:1px"><svg width="16" height="16" viewBox="0 0 16 16"><defs><linearGradient id="wg" x1="0" y1="0" x2="0" y2="1"><stop offset="0" stop-color="#fff68a"/><stop offset="1" stop-color="#f3c80f"/></linearGradient></defs><path d="M8 1.500L15.200 14.900H.8z" fill="url(#wg)" stroke="#c2a30a" stroke-width="1.400" stroke-linejoin="round"/><rect x="7" y="5.500" width="2" height="5" fill="#111"/><rect x="7" y="11.500" width="2" height="2" fill="#111"/></svg></div>
<div class="c" style="left:23.3px;letter-spacing:-0.036px;">Warning</div>
<div class="c" style="left:306.3px;"><span style="display:inline-block;transform:scaleX(0.9069);transform-origin:left center;">3.11.2020 19:05:10</span></div>
<div class="c" style="left:655.5px;letter-spacing:-0.189px;">DeviceSetupManager</div>
<div class="c" style="left:1061px;width:100px;text-align:right;"><span style="display:inline-block;transform:scaleX(0.8986);transform-origin:right center;">202</span></div>
<div class="c" style="left:1173.7px;letter-spacing:0.203px;">None</div>
</div>
<div class="row" style="top:195px">
<div class="ic" style="left:5px;top:1px"><svg width="16" height="16" viewBox="0 0 16 16"><defs><linearGradient id="wg" x1="0" y1="0" x2="0" y2="1"><stop offset="0" stop-color="#fff68a"/><stop offset="1" stop-color="#f3c80f"/></linearGradient></defs><path d="M8 1.500L15.200 14.900H.8z" fill="url(#wg)" stroke="#c2a30a" stroke-width="1.400" stroke-linejoin="round"/><rect x="7" y="5.500" width="2" height="5" fill="#111"/><rect x="7" y="11.500" width="2" height="2" fill="#111"/></svg></div>
<div class="c" style="left:23.3px;letter-spacing:-0.036px;">Warning</div>
<div class="c" style="left:306.3px;"><span style="display:inline-block;transform:scaleX(0.9069);transform-origin:left center;">3.11.2020 19:05:10</span></div>
<div class="c" style="left:655.5px;letter-spacing:-0.189px;">DeviceSetupManager</div>
<div class="c" style="left:1061px;width:100px;text-align:right;"><span style="display:inline-block;transform:scaleX(0.8986);transform-origin:right center;">202</span></div>
<div class="c" style="left:1173.7px;letter-spacing:0.203px;">None</div>
</div>
<div class="row" style="top:214px">
<div class="ic" style="left:5px;top:1px"><svg width="16" height="16" viewBox="0 0 16 16"><defs><radialGradient id="eg" cx=".5" cy=".3" r=".8"><stop offset="0" stop-color="#f0605a"/><stop offset=".6" stop-color="#d01f1f"/><stop offset="1" stop-color="#a30d0d"/></radialGradient></defs><circle cx="8" cy="8" r="7.600" fill="#dcdcdc" stroke="#9c9c9c" stroke-width=".7"/><circle cx="8" cy="8" r="6.500" fill="url(#eg)"/><rect x="7.100" y="3.400" width="1.800" height="6" rx=".5" fill="#fff"/><rect x="7.100" y="10.600" width="1.800" height="1.900" fill="#fff"/></svg></div>
<div class="c" style="left:23.3px;letter-spacing:-0.334px;">Error</div>
<div class="c" style="left:306.3px;"><span style="display:inline-block;transform:scaleX(0.9069);transform-origin:left center;">3.11.2020 19:05:10</span></div>
<div class="c" style="left:655.5px;letter-spacing:-0.247px;">BugCheck</div>
<div class="c" style="left:1061px;width:100px;text-align:right;"><span style="display:inline-block;transform:scaleX(0.8988);transform-origin:right center;">1001</span></div>
<div class="c" style="left:1173.7px;letter-spacing:0.203px;">None</div>
</div>
<div class="row" style="top:233px">
<div class="ic" style="left:5px;top:1px"><svg width="16" height="16" viewBox="0 0 16 16"><defs><radialGradient id="eg" cx=".5" cy=".3" r=".8"><stop offset="0" stop-color="#f0605a"/><stop offset=".6" stop-color="#d01f1f"/><stop offset="1" stop-color="#a30d0d"/></radialGradient></defs><circle cx="8" cy="8" r="7.600" fill="#dcdcdc" stroke="#9c9c9c" stroke-width=".7"/><circle cx="8" cy="8" r="6.500" fill="url(#eg)"/><rect x="7.100" y="3.400" width="1.800" height="6" rx=".5" fill="#fff"/><rect x="7.100" y="10.600" width="1.800" height="1.900" fill="#fff"/></svg></div>
<div class="c" style="left:23.3px;letter-spacing:-0.334px;">Error</div>
<div class="c" style="left:306.3px;"><span style="display:inline-block;transform:scaleX(0.9069);transform-origin:left center;">3.11.2020 19:05:10</span></div>
<div class="c" style="left:655.5px;letter-spacing:-0.213px;">Eventlog</div>
<div class="c" style="left:1061px;width:100px;text-align:right;"><span style="display:inline-block;transform:scaleX(0.9298);transform-origin:right center;">1101</span></div>
<div class="c" style="left:1173.7px;letter-spacing:-0.191px;">Event processing</div>
</div>
<div class="abs" style="left:21px;top:252px;width:1407px;height:19px;background:#0078d7"></div>
<div class="row" style="top:252px;color:#fff">
<div class="ic" style="left:5px;top:1px"><svg width="16" height="16" viewBox="0 0 16 16"><defs><radialGradient id="cg" cx=".5" cy=".3" r=".8"><stop offset="0" stop-color="#7f95ee"/><stop offset=".6" stop-color="#4a55c4"/><stop offset="1" stop-color="#3a2f8e"/></radialGradient></defs><circle cx="8" cy="8" r="7.600" fill="#6a7086" stroke="#4a4e60" stroke-width=".7"/><circle cx="8" cy="8" r="6.500" fill="url(#cg)"/><path d="M4.800 4.800l6.400 6.400M11.200 4.800l-6.400 6.400" stroke="#c9d6ff" stroke-width="1.500"/></svg></div>
<div class="c" style="left:23.3px;letter-spacing:-0.009px;">Critical</div>
<div class="c" style="left:306.3px;"><span style="display:inline-block;transform:scaleX(0.9069);transform-origin:left center;">3.11.2020 19:05:04</span></div>
<div class="c" style="left:655.5px;letter-spacing:-0.184px;">Kernel-Power</div>
<div class="c" style="left:1061px;width:100px;text-align:right;"><span style="display:inline-block;transform:scaleX(0.8982);transform-origin:right center;">41</span></div>
<div class="c" style="left:1173.7px;"><span style="display:inline-block;transform:scaleX(0.9089);transform-origin:left center;">(63)</span></div>
</div>
<div class="row" style="top:271px">
<div class="ic" style="left:5px;top:1px"><svg width="16" height="16" viewBox="0 0 16 16"><defs><radialGradient id="eg" cx=".5" cy=".3" r=".8"><stop offset="0" stop-color="#f0605a"/><stop offset=".6" stop-color="#d01f1f"/><stop offset="1" stop-color="#a30d0d"/></radialGradient></defs><circle cx="8" cy="8" r="7.600" fill="#dcdcdc" stroke="#9c9c9c" stroke-width=".7"/><circle cx="8" cy="8" r="6.500" fill="url(#eg)"/><rect x="7.100" y="3.400" width="1.800" height="6" rx=".5" fill="#fff"/><rect x="7.100" y="10.600" width="1.800" height="1.900" fill="#fff"/></svg></div>
<div class="c" style="left:23.3px;letter-spacing:-0.334px;">Error</div>
<div class="c" style="left:306.3px;"><span style="display:inline-block;transform:scaleX(0.9069);transform-origin:left center;">3.11.2020 19:05:09</span></div>
<div class="c" style="left:655.5px;letter-spacing:-0.352px;">EventLog</div>
<div class="c" style="left:1061px;width:100px;text-align:right;"><span style="display:inline-block;transform:scaleX(0.8988);transform-origin:right center;">6008</span></div>
<div class="c" style="left:1173.7px;letter-spacing:0.203px;">None</div>
</div>
<div class="row" style="top:290px">
<div class="ic" style="left:5px;top:1px"><svg width="16" height="16" viewBox="0 0 16 16"><defs><radialGradient id="eg" cx=".5" cy=".3" r=".8"><stop offset="0" stop-color="#f0605a"/><stop offset=".6" stop-color="#d01f1f"/><stop offset="1" stop-color="#a30d0d"/></radialGradient></defs><circle cx="8" cy="8" r="7.600" fill="#dcdcdc" stroke="#9c9c9c" stroke-width=".7"/><circle cx="8" cy="8" r="6.500" fill="url(#eg)"/><rect x="7.100" y="3.400" width="1.800" height="6" rx=".5" fill="#fff"/><rect x="7.100" y="10.600" width="1.800" height="1.900" fill="#fff"/></svg></div>
<div class="c" style="left:23.3px;letter-spacing:-0.334px;">Error</div>
<div class="c" style="left:306.3px;"><span style="display:inline-block;transform:scaleX(0.9069);transform-origin:left center;">3.11.2020 19:05:02</span></div>
<div class="c" style="left:655.5px;letter-spacing:-0.089px;">Kernel-Boot</div>
<div class="c" style="left:1061px;width:100px;text-align:right;"><span style="display:inline-block;transform:scaleX(0.8982);transform-origin:right center;">29</span></div>
<div class="c" style="left:1173.7px;letter-spacing:0.203px;">None</div>
</div>
<div class="row" style="top:309px">
<div class="ic" style="left:5px;top:1px"><svg width="16" height="16" viewBox="0 0 16 16"><defs><linearGradient id="wg" x1="0" y1="0" x2="0" y2="1"><stop offset="0" stop-color="#fff68a"/><stop offset="1" stop-color="#f3c80f"/></linearGradient></defs><path d="M8 1.500L15.200 14.900H.8z" fill="url(#wg)" stroke="#c2a30a" stroke-width="1.400" stroke-linejoin="round"/><rect x="7" y="5.500" width="2" height="5" fill="#111"/><rect x="7" y="11.500" width="2" height="2" fill="#111"/></svg></div>
<div class="c" style="left:23.3px;letter-spacing:-0.036px;">Warning</div>
<div class="c" style="left:306.3px;"><span style="display:inline-block;transform:scaleX(0.9069);transform-origin:left center;">2.11.2020 20:28:13</span></div>
<div class="c" style="left:655.5px;"><span style="display:inline-block;transform-origin:left center;transform:scaleX(0.8322)">ESENT</span></div>
<div class="c" style="left:1061px;width:100px;text-align:right;"><span style="display:inline-block;transform:scaleX(0.8986);transform-origin:right center;">642</span></div>
<div class="c" style="left:1173.7px;"><span style="display:inline-block;transform:scaleX(0.9133);transform-origin:left center;">(1)</span></div>
</div>
<div class="row" style="top:328px">
<div class="ic" style="left:5px;top:1px"><svg width="16" height="16" viewBox="0 0 16 16"><defs><linearGradient id="wg" x1="0" y1="0" x2="0" y2="1"><stop offset="0" stop-color="#fff68a"/><stop offset="1" stop-color="#f3c80f"/></linearGradient></defs><path d="M8 1.500L15.200 14.900H.8z" fill="url(#wg)" stroke="#c2a30a" stroke-width="1.400" stroke-linejoin="round"/><rect x="7" y="5.500" width="2" height="5" fill="#111"/><rect x="7" y="11.500" width="2" height="2" fill="#111"/></svg></div>
<div class="c" style="left:23.3px;letter-spacing:-0.036px;">Warning</div>
<div class="c" style="left:306.3px;"><span style="display:inline-block;transform:scaleX(0.9069);transform-origin:left center;">2.11.2020 20:28:13</span></div>
<div class="c" style="left:655.5px;"><span style="display:inline-block;transform-origin:left center;transform:scaleX(0.8322)">ESENT</span></div>
<div class="c" style="left:1061px;width:100px;text-align:right;"><span style="display:inline-block;transform:scaleX(0.8986);transform-origin:right center;">642</span></div>
<div class="c" style="left:1173.7px;"><span style="display:inline-block;transform:scaleX(0.9133);transform-origin:left center;">(1)</span></div>
</div>
<div class="row" style="top:347px">
<div class="ic" style="left:5px;top:1px"><svg width="16" height="16" viewBox="0 0 16 16"><defs><linearGradient id="wg" x1="0" y1="0" x2="0" y2="1"><stop offset="0" stop-color="#fff68a"/><stop offset="1" stop-color="#f3c80f"/></linearGradient></defs><path d="M8 1.500L15.200 14.900H.8z" fill="url(#wg)" stroke="#c2a30a" stroke-width="1.400" stroke-linejoin="round"/><rect x="7" y="5.500" width="2" height="5" fill="#111"/><rect x="7" y="11.500" width="2" height="2" fill="#111"/></svg></div>
<div class="c" style="left:23.3px;letter-spacing:-0.036px;">Warning</div>
<div class="c" style="left:306.3px;"><span style="display:inline-block;transform:scaleX(0.9069);transform-origin:left center;">2.11.2020 20:22:00</span></div>
<div class="c" style="left:655.5px;"><span style="display:inline-block;transform-origin:left center;transform:scaleX(0.8322)">ESENT</span></div>
<div class="c" style="left:1061px;width:100px;text-align:right;"><span style="display:inline-block;transform:scaleX(0.8986);transform-origin:right center;">642</span></div>
<div class="c" style="left:1173.7px;"><span style="display:inline-block;transform:scaleX(0.9133);transform-origin:left center;">(1)</span></div>
</div>
<div class="row" style="top:366px">
<div class="ic" style="left:5px;top:1px"><svg width="16" height="16" viewBox="0 0 16 16"><defs><linearGradient id="wg" x1="0" y1="0" x2="0" y2="1"><stop offset="0" stop-color="#fff68a"/><stop offset="1" stop-color="#f3c80f"/></linearGradient></defs><path d="M8 1.500L15.200 14.900H.8z" fill="url(#wg)" stroke="#c2a30a" stroke-width="1.400" stroke-linejoin="round"/><rect x="7" y="5.500" width="2" height="5" fill="#111"/><rect x="7" y="11.500" width="2" height="2" fill="#111"/></svg></div>
<div class="c" style="left:23.3px;letter-spacing:-0.036px;">Warning</div>
<div class="c" style="left:306.3px;"><span style="display:inline-block;transform:scaleX(0.9069);transform-origin:left center;">2.11.2020 20:22:00</span></div>
<div class="c" style="left:655.5px;"><span style="display:inline-block;transform-origin:left center;transform:scaleX(0.8322)">ESENT</span></div>
<div class="c" style="left:1061px;width:100px;text-align:right;"><span style="display:inline-block;transform:scaleX(0.8986);transform-origin:right center;">642</span></div>
<div class="c" style="left:1173.7px;"><span style="display:inline-block;transform:scaleX(0.9133);transform-origin:left center;">(1)</span></div>
</div>
<div class="row" style="top:385px">
<div class="ic" style="left:5px;top:1px"><svg width="16" height="16" viewBox="0 0 16 16"><defs><linearGradient id="wg" x1="0" y1="0" x2="0" y2="1"><stop offset="0" stop-color="#fff68a"/><stop offset="1" stop-color="#f3c80f"/></linearGradient></defs><path d="M8 1.500L15.200 14.900H.8z" fill="url(#wg)" stroke="#c2a30a" stroke-width="1.400" stroke-linejoin="round"/><rect x="7" y="5.500" width="2" height="5" fill="#111"/><rect x="7" y="11.500" width="2" height="2" fill="#111"/></svg></div>
<div class="c" style="left:23.3px;letter-spacing:-0.036px;">Warning</div>
<div class="c" style="left:306.3px;"><span style="display:inline-block;transform:scaleX(0.9069);transform-origin:left center;">2.11.2020 20:22:00</span></div>
<div class="c" style="left:655.5px;"><span style="display:inline-block;transform-origin:left center;transform:scaleX(0.8322)">ESENT</span></div>
<div class="c" style="left:1061px;width:100px;text-align:right;"><span style="display:inline-block;transform:scaleX(0.8986);transform-origin:right center;">642</span></div>
<div class="c" style="left:1173.7px;"><span style="display:inline-block;transform:scaleX(0.9133);transform-origin:left center;">(1)</span></div>
</div>
<div class="row" style="top:404px">
<div class="ic" style="left:5px;top:1px"><svg width="16" height="16" viewBox="0 0 16 16"><defs><linearGradient id="wg" x1="0" y1="0" x2="0" y2="1"><stop offset="0" stop-color="#fff68a"/><stop offset="1" stop-color="#f3c80f"/></linearGradient></defs><path d="M8 1.500L15.200 14.900H.8z" fill="url(#wg)" stroke="#c2a30a" stroke-width="1.400" stroke-linejoin="round"/><rect x="7" y="5.500" width="2" height="5" fill="#111"/><rect x="7" y="11.500" width="2" height="2" fill="#111"/></svg></div>
<div class="c" style="left:23.3px;letter-spacing:-0.036px;">Warning</div>
<div class="c" style="left:306.3px;"><span style="display:inline-block;transform:scaleX(0.9069);transform-origin:left center;">2.11.2020 20:17:04</span></div>
<div class="c" style="left:655.5px;letter-spacing:0.046px;">DistributedCOM</div>
<div class="c" style="left:1061px;width:100px;text-align:right;"><span style="display:inline-block;transform:scaleX(0.8989);transform-origin:right center;">10016</span></div>
<div class="c" style="left:1173.7px;letter-spacing:0.203px;">None</div>
</div>
<div class="row" style="top:423px">
<div class="ic" style="left:5px;top:1px"><svg width="16" height="16" viewBox="0 0 16 16"><defs><linearGradient id="wg" x1="0" y1="0" x2="0" y2="1"><stop offset="0" stop-color="#fff68a"/><stop offset="1" stop-color="#f3c80f"/></linearGradient></defs><path d="M8 1.500L15.200 14.900H.8z" fill="url(#wg)" stroke="#c2a30a" stroke-width="1.400" stroke-linejoin="round"/><rect x="7" y="5.500" width="2" height="5" fill="#111"/><rect x="7" y="11.500" width="2" height="2" fill="#111"/></svg></div>
<div class="c" style="left:23.3px;letter-spacing:-0.036px;">Warning</div>
<div class="c" style="left:306.3px;"><span style="display:inline-block;transform:scaleX(0.9069);transform-origin:left center;">2.11.2020 20:17:04</span></div>
<div class="c" style="left:655.5px;letter-spacing:0.046px;">DistributedCOM</div>
<div class="c" style="left:1061px;width:100px;text-align:right;"><span style="display:inline-block;transform:scaleX(0.8989);transform-origin:right center;">10016</span></div>
<div class="c" style="left:1173.7px;letter-spacing:0.203px;">None</div>
</div>
<div class="row" style="top:442px">
<div class="ic" style="left:5px;top:1px"><svg width="16" height="16" viewBox="0 0 16 16"><defs><linearGradient id="wg" x1="0" y1="0" x2="0" y2="1"><stop offset="0" stop-color="#fff68a"/><stop offset="1" stop-color="#f3c80f"/></linearGradient></defs><path d="M8 1.500L15.200 14.900H.8z" fill="url(#wg)" stroke="#c2a30a" stroke-width="1.400" stroke-linejoin="round"/><rect x="7" y="5.500" width="2" height="5" fill="#111"/><rect x="7" y="11.500" width="2" height="2" fill="#111"/></svg></div>
<div class="c" style="left:23.3px;letter-spacing:-0.036px;">Warning</div>
<div class="c" style="left:306.3px;"><span style="display:inline-block;transform:scaleX(0.9069);transform-origin:left center;">2.11.2020 20:15:26</span></div>
<div class="c" style="left:655.5px;letter-spacing:0.046px;">DistributedCOM</div>
<div class="c" style="left:1061px;width:100px;text-align:right;"><span style="display:inline-block;transform:scaleX(0.8989);transform-origin:right center;">10016</span></div>
<div class="c" style="left:1173.7px;letter-spacing:0.203px;">None</div>
</div>
<div class="row" style="top:461px">
<div class="ic" style="left:5px;top:1px"><svg width="16" height="16" viewBox="0 0 16 16"><defs><linearGradient id="wg" x1="0" y1="0" x2="0" y2="1"><stop offset="0" stop-color="#fff68a"/><stop offset="1" stop-color="#f3c80f"/></linearGradient></defs><path d="M8 1.500L15.200 14.900H.8z" fill="url(#wg)" stroke="#c2a30a" stroke-width="1.400" stroke-linejoin="round"/><rect x="7" y="5.500" width="2" height="5" fill="#111"/><rect x="7" y="11.500" width="2" height="2" fill="#111"/></svg></div>
<div class="c" style="left:23.3px;letter-spacing:-0.036px;">Warning</div>
<div class="c" style="left:306.3px;"><span style="display:inline-block;transform:scaleX(0.9069);transform-origin:left center;">2.11.2020 20:14:06</span></div>
<div class="c" style="left:655.5px;letter-spacing:0.046px;">DistributedCOM</div>
<div class="c" style="left:1061px;width:100px;text-align:right;"><span style="display:inline-block;transform:scaleX(0.8989);transform-origin:right center;">10016</span></div>
<div class="c" style="left:1173.7px;letter-spacing:0.203px;">None</div>
</div>
<div class="row" style="top:480px">
<div class="ic" style="left:5px;top:1px"><svg width="16" height="16" viewBox="0 0 16 16"><defs><linearGradient id="wg" x1="0" y1="0" x2="0" y2="1"><stop offset="0" stop-color="#fff68a"/><stop offset="1" stop-color="#f3c80f"/></linearGradient></defs><path d="M8 1.500L15.200 14.900H.8z" fill="url(#wg)" stroke="#c2a30a" stroke-width="1.400" stroke-linejoin="round"/><rect x="7" y="5.500" width="2" height="5" fill="#111"/><rect x="7" y="11.500" width="2" height="2" fill="#111"/></svg></div>
<div class="c" style="left:23.3px;letter-spacing:-0.036px;">Warning</div>
<div class="c" style="left:306.3px;"><span style="display:inline-block;transform:scaleX(0.9069);transform-origin:left center;">2.11.2020 20:13:14</span></div>
<div class="c" style="left:655.5px;letter-spacing:-0.189px;">DeviceSetupManager</div>
<div class="c" style="left:1061px;width:100px;text-align:right;"><span style="display:inline-block;transform:scaleX(0.8986);transform-origin:right center;">200</span></div>
<div class="c" style="left:1173.7px;letter-spacing:0.203px;">None</div>
</div>
<div class="row" style="top:499px">
<div class="ic" style="left:5px;top:1px"><svg width="16" height="16" viewBox="0 0 16 16"><defs><linearGradient id="wg" x1="0" y1="0" x2="0" y2="1"><stop offset="0" stop-color="#fff68a"/><stop offset="1" stop-color="#f3c80f"/></linearGradient></defs><path d="M8 1.500L15.200 14.900H.8z" fill="url(#wg)" stroke="#c2a30a" stroke-width="1.400" stroke-linejoin="round"/><rect x="7" y="5.500" width="2" height="5" fill="#111"/><rect x="7" y="11.500" width="2" height="2" fill="#111"/></svg></div>
<div class="c" style="left:23.3px;letter-spacing:-0.036px;">Warning</div>
<div class="c" style="left:306.3px;"><span style="display:inline-block;transform:scaleX(0.9069);transform-origin:left center;">2.11.2020 20:13:14</span></div>
<div class="c" style="left:655.5px;letter-spacing:-0.189px;">DeviceSetupManager</div>
<div class="c" style="left:1061px;width:100px;text-align:right;"><span style="display:inline-block;transform:scaleX(0.8986);transform-origin:right center;">202</span></div>
<div class="c" style="left:1173.7px;letter-spacing:0.203px;">None</div>
</div>
<div class="row" style="top:518px">
<div class="ic" style="left:5px;top:1px"><svg width="16" height="16" viewBox="0 0 16 16"><defs><linearGradient id="wg" x1="0" y1="0" x2="0" y2="1"><stop offset="0" stop-color="#fff68a"/><stop offset="1" stop-color="#f3c80f"/></linearGradient></defs><path d="M8 1.500L15.200 14.900H.8z" fill="url(#wg)" stroke="#c2a30a" stroke-width="1.400" stroke-linejoin="round"/><rect x="7" y="5.500" width="2" height="5" fill="#111"/><rect x="7" y="11.500" width="2" height="2" fill="#111"/></svg></div>
<div class="c" style="left:23.3px;letter-spacing:-0.036px;">Warning</div>
<div class="c" style="left:306.3px;"><span style="display:inline-block;transform:scaleX(0.9069);transform-origin:left center;">2.11.2020 20:13:14</span></div>
<div class="c" style="left:655.5px;letter-spacing:-0.189px;">DeviceSetupManager</div>
<div class="c" style="left:1061px;width:100px;text-align:right;"><span style="display:inline-block;transform:scaleX(0.8986);transform-origin:right center;">200</span></div>
<div class="c" style="left:1173.7px;letter-spacing:0.203px;">None</div>
</div>
<div class="abs" style="left:0;top:0;width:1px;height:532px;background:#696969"></div>
<div class="abs" style="left:1432px;top:0;width:16px;height:532px;background:#f0f0f0"></div>
<div class="abs" style="left:1432px;top:297px;width:16px;height:17px;background:#cdcdcd"></div>
<svg class="abs" style="left:1436px;top:6px" width="7" height="7" viewBox="0 0 7 7"><path d="M0 3.500L3.500 0L7 3.500V6.100L3.500 2.600L0 6.100z" fill="#4a4a4a"/></svg>
<svg class="abs" style="left:1436px;top:521px" width="7" height="7" viewBox="0 0 7 7"><path d="M0 0L3.500 3.500L7 0V2.600L3.500 6.100L0 2.600z" fill="#4a4a4a"/></svg>
</div>
<div class="abs" style="left:274px;top:642px;width:1449px;height:1px;background:#fff"></div>
<div class="abs" style="left:274px;top:647px;width:1449px;height:2px;background:#787878"></div>
<div class="t" style="left:280px;top:652px;letter-spacing:-0.270px;">Event 41, Kernel-Power</div>
<svg class="abs" style="left:1702px;top:654px" width="10" height="10" viewBox="0 0 10 10"><path d="M1.500 1.500l7 7M8.500 1.500l-7 7" stroke="#000" stroke-width="2"/></svg>
<div class="abs" style="left:277px;top:670px;width:1443px;height:2px;background:#9a9a9a"></div>
<div class="abs" style="left:282px;top:700px;width:1432px;height:314px;border:1px solid #dcdcdc;background:#fff"></div>
<div class="abs" style="left:286px;top:703px;width:1425px;height:308px;background:#f0f0f0"></div>
<div class="abs" style="left:282px;top:678px;width:55px;height:24px;background:#fff;border:1px solid #dcdcdc;border-bottom:none"></div>
<div class="abs" style="left:337px;top:681px;width:45px;height:20px;background:#f0f0f0;border:1px solid #d9d9d9;border-bottom:none;border-left:none"></div>
<div class="t" style="left:290.3px;top:681px;letter-spacing:-0.486px;">General</div>
<div class="t" style="left:342.3px;top:683px;letter-spacing:-0.327px;">Details</div>
<div class="abs" style="left:297px;top:717px;width:1384px;height:111px;border:1px solid #6e6e6e;border-right-color:#fff;border-bottom-color:#fff"></div>
<div class="abs" style="left:298px;top:718px;width:1382px;height:109px;border-left:1px solid #a0a0a0;border-top:1px solid #a0a0a0"></div>
<div class="t" style="left:300px;top:720px;letter-spacing:-0.042px;">The system has rebooted without cleanly shutting down first. This error could be caused if the system stopped responding, crashed, or lost power unexpectedly.</div>
<div class="lab" style="left:295.2px;top:843px;letter-spacing:-0.111px;">Log Name:</div>
<div class="lab" style="left:402.1px;top:843px;letter-spacing:-0.386px;">System</div>
<div class="lab" style="left:295.2px;top:864px;letter-spacing:-0.408px;">Source:</div>
<div class="lab" style="left:402.1px;top:864px;letter-spacing:-0.184px;">Kernel-Power</div>
<div class="lab" style="left:560.2px;top:864px;letter-spacing:-0.113px;">Logged:</div>
<div class="lab" style="left:646.2px;top:864px;"><span style="display:inline-block;transform:scaleX(0.9069);transform-origin:left center;">3.11.2020 19:05:04</span></div>
<div class="lab" style="left:295.2px;top:885px;letter-spacing:-0.429px;">Event ID:</div>
<div class="lab" style="left:402.1px;top:885px;"><span style="display:inline-block;transform:scaleX(0.8982);transform-origin:left center;">41</span></div>
<div class="lab" style="left:560.2px;top:885px;letter-spacing:-0.339px;">Task Category:</div>
<div class="lab" style="left:646.2px;top:885px;"><span style="display:inline-block;transform:scaleX(0.9089);transform-origin:left center;">(63)</span></div>
<div class="lab" style="left:295.2px;top:906px;letter-spacing:-0.422px;">Level:</div>
<div class="lab" style="left:402.1px;top:906px;letter-spacing:-0.009px;">Critical</div>
<div class="lab" style="left:560.2px;top:906px;letter-spacing:-0.315px;">Keywords:</div>
<div class="lab" style="left:646.2px;top:906px;"><span style="display:inline-block;transform:scaleX(0.9026);transform-origin:left center;">(70368744177664),(2)</span></div>
<div class="lab" style="left:295.2px;top:927px;"><span style="display:inline-block;transform-origin:left center;transform:scaleX(0.8859)">User:</span></div>
<div class="lab" style="left:402.1px;top:927px"><span style="display:inline-block;transform-origin:left center;transform:scaleX(0.8471)">SYSTEM</span></div>
<div class="lab" style="left:560.2px;top:927px;letter-spacing:0.052px;">Computer:</div>
<div class="lab" style="left:646.2px;top:927px"><span style="display:inline-block;transform-origin:left center;transform:scaleX(0.8879)">DESKTOP-QDG40AU</span></div>
<div class="lab" style="left:295.2px;top:948px;letter-spacing:-0.247px;">OpCode:</div>
<div class="lab" style="left:402.1px;top:948px;letter-spacing:0.121px;">Info</div>
<div class="lab" style="left:295.2px;top:969px;letter-spacing:0.156px;">More Information:</div>
<div class="lab" style="left:405.4px;top:969px;letter-spacing:-0.123px;color:#0000ff;text-decoration:underline;">Event Log Online Help</div>
<div class="abs" style="left:1730px;top:75px;width:190px;height:950px;background:#fff;border-left:2px solid #696969;border-left-color:#696969;border-top:1px solid #696969;border-right:1px solid #f0f0f0"></div>
<div class="abs" style="left:1730px;top:76px;width:1px;height:949px;background:#b4b4b4"></div>
<div class="abs" style="left:1732px;top:76px;width:187px;height:1px;background:#a0a0a0"></div>
<div class="abs" style="left:1918px;top:76px;width:1px;height:949px;background:#fff"></div>
<div class="abs" style="left:1732px;top:77px;width:186px;height:20px;background:#f0f0f0"></div>
<div class="abs" style="left:1732px;top:97px;width:186px;height:1px;background:#8c8c8c"></div>
<div class="t" style="left:1737.300px;top:80px;font-weight:bold;font-size:12.500px;letter-spacing:-0.35px">Akcie</div>
<div class="abs" style="left:1732px;top:99px;width:186px;height:25px;background:linear-gradient(#bdd3ec,#abc6e2 55%,#9bb8da)"></div>
<div class="t" style="left:1739.3px;top:104px;letter-spacing:-0.095px;">Administrative Events</div>
<div class="abs" style="left:1901px;top:109px;width:0;height:0;border-left:5px solid transparent;border-right:5px solid transparent;border-bottom:5px solid #000"></div>
<div class="ic" style="left:1737px;top:127px"><svg width="16" height="16" viewBox="0 0 16 16"><path d="M1.5 4.5h4l1 1.2h6v2H4L2 13.5z" fill="#e0b85a" stroke="#b58d32" stroke-width=".8"/><path d="M4 7.5h11l-2.3 6.5H1.7z" fill="#f6dc8c" stroke="#b99438" stroke-width=".8"/></svg></div>
<div class="act" style="left:1763.3px;top:128px;letter-spacing:-0.375px;">Open Saved Log...</div>
<div class="ic" style="left:1737px;top:151px"><svg width="16" height="16" viewBox="0 0 16 16"><defs><linearGradient id="fu" x1="0" y1="0" x2="1" y2="1"><stop offset="0" stop-color="#c9d5e0"/><stop offset=".5" stop-color="#8fa2b4"/><stop offset="1" stop-color="#5d6e7e"/></linearGradient></defs><path d="M1 2.500h14l-5.700 5.500v6.500H7V8z" fill="url(#fu)" stroke="#66788a" stroke-width=".7"/><path d="M1.300 2.800h7.500L6.800 5.800 4 5.500z" fill="#f7a91a"/></svg></div>
<div class="act" style="left:1763.3px;top:152px;letter-spacing:-0.199px;">Create Custom View...</div>
<div class="act" style="left:1763.3px;top:176px;letter-spacing:-0.007px;">Import Custom View...</div>
<div class="ic" style="left:1737px;top:200px"><svg width="16" height="16" viewBox="0 0 16 16"><defs><linearGradient id="fu" x1="0" y1="0" x2="1" y2="1"><stop offset="0" stop-color="#c9d5e0"/><stop offset=".5" stop-color="#8fa2b4"/><stop offset="1" stop-color="#5d6e7e"/></linearGradient></defs><path d="M1 2.500h14l-5.700 5.500v6.500H7V8z" fill="url(#fu)" stroke="#66788a" stroke-width=".7"/><path d="M3 3.400h10l-.9.900H3.900z" fill="#e9eef3"/></svg></div>
<div class="act" style="left:1763.3px;top:201px;letter-spacing:-0.121px;">Filter Current Custom ...</div>
<div class="ic" style="left:1737px;top:224px"><svg width="16" height="16" viewBox="0 0 16 16"><rect x="1.5" y="1.5" width="13" height="13" rx="1" fill="#f4f5f7" stroke="#8b929b" stroke-width="1"/><rect x="3.5" y="4" width="9" height="7.5" fill="#fff" stroke="#a8aeb6" stroke-width=".7"/><path d="M5 6.500h6M5 8.500h6M5 10.500h6" stroke="#6f7a88" stroke-width="1"/><rect x="5" y="12.7" width="6" height="1" fill="#9aa0a8"/></svg></div>
<div class="act" style="left:1763.3px;top:225px;letter-spacing:-0.240px;">Properties</div>
<div class="ic" style="left:1737px;top:248px"><svg width="16" height="16" viewBox="0 0 16 16"><path d="M2 2.5h4.5V10H2zM9.500 2.500h4.500V10H9.500z" fill="#555b63" stroke="#2f343b" stroke-width=".8"/><rect x="6.500" y="4" width="3" height="3" fill="#3c4148"/><rect x="1" y="9.500" width="6" height="5.500" rx="1.500" fill="#dde6f2" stroke="#4a78b8" stroke-width="1"/><rect x="9" y="9.500" width="6" height="5.500" rx="1.500" fill="#dde6f2" stroke="#4a78b8" stroke-width="1"/></svg></div>
<div class="act" style="left:1763.3px;top:249px;letter-spacing:-0.337px;">Find...</div>
<div class="ic" style="left:1737px;top:272px"><svg width="16" height="16" viewBox="0 0 16 16"><path d="M1.500 1.500h13v13h-13z" fill="#3d4046" stroke="#22252a" stroke-width="1"/><rect x="3.500" y="1.500" width="9" height="6.500" fill="#fff"/><rect x="4.500" y="10.500" width="7" height="4" fill="#d4d7dc"/><rect x="5.500" y="11.300" width="2" height="2.700" fill="#3d4046"/></svg></div>
<div class="act" style="left:1763.3px;top:273px;letter-spacing:-0.302px;">Save All Events in Cust...</div>
<div class="act" style="left:1763.3px;top:297px;letter-spacing:-0.116px;">Export Custom View...</div>
<div class="act" style="left:1763.3px;top:321px;letter-spacing:-0.104px;">Copy Custom View...</div>
<div class="act" style="left:1763.3px;top:345px;letter-spacing:-0.299px;">Attach Task To This Cus...</div>
<div class="act" style="left:1763.3px;top:370px;letter-spacing:-0.202px;">Zobraziť</div>
<div class="arr" style="top:373px"></div>
<div class="ic" style="left:1737px;top:394px"><svg width="16" height="16" viewBox="0 0 16 16"><path d="M2 .8h8.500l3.500 3.500V15.200H2z" fill="#fbfbfb" stroke="#9aa0a6" stroke-width=".9"/><path d="M10.500.8v3.500H14" fill="#e6e6e6" stroke="#9aa0a6" stroke-width=".7"/><path d="M11.300 9.200a3.400 3.400 0 1 1-1.200-2.700" fill="none" stroke="#3fae3f" stroke-width="1.900"/><path d="M9 5.300l3.200.3-1 3z" fill="#3fae3f"/></svg></div>
<div class="act" style="left:1763.3px;top:395px;letter-spacing:0.053px;">Obnoviť</div>
<div class="ic" style="left:1737px;top:419px"><svg width="16" height="16" viewBox="0 0 16 16"><defs><linearGradient id="hg" x1="0" y1="0" x2="1" y2="1"><stop offset="0" stop-color="#2a3fae"/><stop offset="1" stop-color="#6c88dc"/></linearGradient></defs><rect x="1.500" y=".5" width="13" height="15" fill="url(#hg)" stroke="#1f2f86" stroke-width="1"/><text x="8" y="13" font-family="Liberation Sans,sans-serif" font-weight="bold" font-size="13" fill="#fff" text-anchor="middle">?</text></svg></div>
<div class="act" style="left:1763.3px;top:420px;letter-spacing:0.068px;">Pomocník</div>
<div class="arr" style="top:423px"></div>
<div class="sep" style="top:196px"></div>
<div class="sep" style="top:365px"></div>
<div class="sep" style="top:390px"></div>
<div class="sep" style="top:415px"></div>
<div class="abs" style="left:1732px;top:445px;width:186px;height:25px;background:linear-gradient(#bdd3ec,#abc6e2 55%,#9bb8da)"></div>
<div class="t" style="left:1739.3px;top:450px;letter-spacing:-0.270px;">Event 41, Kernel-Power</div>
<div class="abs" style="left:1901px;top:455px;width:0;height:0;border-left:5px solid transparent;border-right:5px solid transparent;border-bottom:5px solid #000"></div>
<div class="ic" style="left:1737px;top:473px"><svg width="16" height="16" viewBox="0 0 16 16"><rect x="1.5" y="1.5" width="13" height="13" rx="1" fill="#f4f5f7" stroke="#8b929b" stroke-width="1"/><rect x="3.5" y="4" width="9" height="7.5" fill="#fff" stroke="#a8aeb6" stroke-width=".7"/><path d="M5 6.500h6M5 8.500h6M5 10.500h6" stroke="#6f7a88" stroke-width="1"/><rect x="5" y="12.7" width="6" height="1" fill="#9aa0a8"/></svg></div>
<div class="act" style="left:1763.3px;top:474px;letter-spacing:-0.270px;">Event Properties</div>
<div class="ic" style="left:1737px;top:497px"><svg width="16" height="16" viewBox="0 0 16 16"><rect x="2.500" y="2.500" width="12" height="12" rx="1" fill="#f2f2f2" stroke="#8a8f96" stroke-width="1"/><circle cx="8.500" cy="8.500" r="3.800" fill="#fff" stroke="#777" stroke-width="1"/><path d="M8.500 6.200v2.500h1.800" stroke="#444" fill="none" stroke-width=".9"/><path d="M1 .5l3 1.200L1.500 4z" fill="#f1a91e"/></svg></div>
<div class="act" style="left:1763.3px;top:498px;letter-spacing:-0.354px;">Attach Task To This Eve...</div>
<div class="ic" style="left:1737px;top:521px"><svg width="16" height="16" viewBox="0 0 16 16"><rect x="1.500" y="1.500" width="7.500" height="9" fill="#fff" stroke="#8b95a3" stroke-width=".9"/><path d="M3 4h4.500M3 6h4.500M3 8h3" stroke="#9fb0c8" stroke-width=".8"/><rect x="6.500" y="5.500" width="8" height="9.500" fill="#fff" stroke="#8b95a3" stroke-width=".9"/><path d="M8 8h5M8 10h5M8 12h5" stroke="#9fb0c8" stroke-width=".8"/></svg></div>
<div class="act" style="left:1763.3px;top:522px;letter-spacing:-0.129px;">Copy</div>
<div class="arr" style="top:525px"></div>
<div class="ic" style="left:1737px;top:545px"><svg width="16" height="16" viewBox="0 0 16 16"><path d="M1.500 1.500h13v13h-13z" fill="#3d4046" stroke="#22252a" stroke-width="1"/><rect x="3.500" y="1.500" width="9" height="6.500" fill="#fff"/><rect x="4.500" y="10.500" width="7" height="4" fill="#d4d7dc"/><rect x="5.500" y="11.300" width="2" height="2.700" fill="#3d4046"/></svg></div>
<div class="act" style="left:1763.3px;top:546px;letter-spacing:-0.487px;">Save Selected Events...</div>
<div class="ic" style="left:1737px;top:570px"><svg width="16" height="16" viewBox="0 0 16 16"><path d="M2 .8h8.500l3.500 3.500V15.200H2z" fill="#fbfbfb" stroke="#9aa0a6" stroke-width=".9"/><path d="M10.500.8v3.500H14" fill="#e6e6e6" stroke="#9aa0a6" stroke-width=".7"/><path d="M11.300 9.200a3.400 3.400 0 1 1-1.200-2.700" fill="none" stroke="#3fae3f" stroke-width="1.900"/><path d="M9 5.300l3.200.3-1 3z" fill="#3fae3f"/></svg></div>
<div class="act" style="left:1763.3px;top:571px;letter-spacing:0.053px;">Obnoviť</div>
<div class="ic" style="left:1737px;top:595px"><svg width="16" height="16" viewBox="0 0 16 16"><defs><linearGradient id="hg" x1="0" y1="0" x2="1" y2="1"><stop offset="0" stop-color="#2a3fae"/><stop offset="1" stop-color="#6c88dc"/></linearGradient></defs><rect x="1.500" y=".5" width="13" height="15" fill="url(#hg)" stroke="#1f2f86" stroke-width="1"/><text x="8" y="13" font-family="Liberation Sans,sans-serif" font-weight="bold" font-size="13" fill="#fff" text-anchor="middle">?</text></svg></div>
<div class="act" style="left:1763.3px;top:596px;letter-spacing:0.068px;">Pomocník</div>
<div class="arr" style="top:599px"></div>
<div class="sep" style="top:566px"></div>
<div class="sep" style="top:591px"></div>
<div class="abs" style="left:0;top:1028px;width:1920px;height:22px;background:#f0f0f0"></div>
<div class="abs" style="left:268px;top:1027px;width:1652px;height:1px;background:#fbfbfb"></div>
<div class="abs" style="left:1699px;top:1029px;width:1px;height:20px;background:#d8d8d8"></div>
<div class="abs" style="left:1700px;top:1029px;width:1px;height:20px;background:#fafafa"></div>
<div class="abs" style="left:1832px;top:1029px;width:1px;height:20px;background:#d8d8d8"></div>
<div class="abs" style="left:1833px;top:1029px;width:1px;height:20px;background:#fafafa"></div>
<div class="abs" style="left:1917px;top:1029px;width:1px;height:20px;background:#d8d8d8"></div>
<div class="abs" style="left:1918px;top:1029px;width:1px;height:20px;background:#fafafa"></div>
</body></html>
